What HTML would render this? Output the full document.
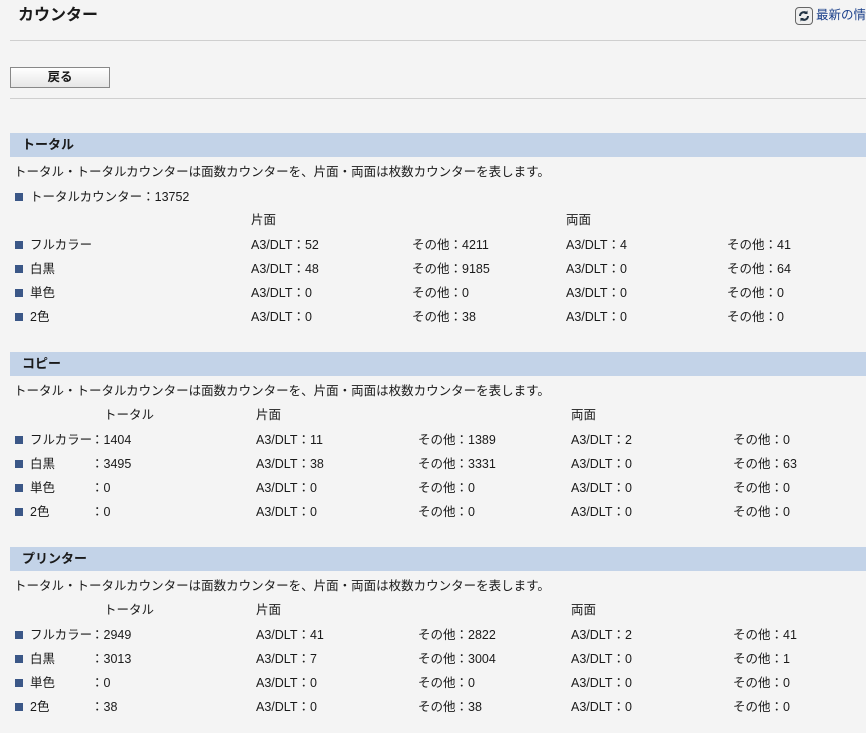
<!DOCTYPE html>
<html><head><meta charset="utf-8"><style>
body{margin:0;width:866px;height:733px;background:#f4f4f4;font-family:"Liberation Sans","Noto Sans CJK JP",sans-serif;font-size:12.5px;color:#1a1a1a;position:relative;overflow:hidden}
.a{position:absolute;white-space:nowrap;line-height:16px}
.hr{position:absolute;left:10px;right:0;height:1px;background:#cfcfcf}
.bar{position:absolute;left:10px;right:0;height:24px;background:#c3d3e8;font-weight:bold;font-size:13px;line-height:24px;padding-left:12px;box-sizing:border-box}
.b{position:absolute;width:8px;height:8px;background:#3b5787}
</style></head><body>
<div class="a" style="left:18px;top:6px;font-size:16px;font-weight:bold;line-height:20px">カウンター</div>
<div class="a" style="left:795px;top:7px;width:18px;height:18px;border:1px solid #666;border-radius:4px;box-sizing:border-box;background:#eee"><svg width="16" height="16" viewBox="0 0 16 16" style="position:absolute;left:0;top:0"><path d="M4 8a4 4 0 0 1 7-2.5M12 8a4 4 0 0 1-7 2.5" stroke="#234" stroke-width="2" fill="none"/><path d="M11.5 2.5v3.5h-3.5zM4.5 13.5v-3.5h3.5z" fill="#234"/></svg></div>
<div class="a" style="left:816px;top:7px;color:#1a3f8a">最新の情報</div>
<div class="hr" style="top:40px"></div>
<div class="a" style="left:10px;top:67px;width:100px;height:21px;box-sizing:border-box;border:1px solid #888;background:linear-gradient(#fff,#e6e6e6);text-align:center;font-weight:bold;line-height:19px">戻る</div>
<div class="hr" style="top:98px"></div>

<div class="bar" style="top:133px">トータル</div>
<div class="a" style="left:14px;top:164px">トータル・トータルカウンターは面数カウンターを、片面・両面は枚数カウンターを表します。</div>
<div class="b" style="left:15px;top:193px"></div><div class="a" style="left:30px;top:189px">トータルカウンター：13752</div>
<div class="a" style="left:251px;top:212px">片面</div><div class="a" style="left:566px;top:212px">両面</div>
<div class="b" style="left:15px;top:241px"></div><div class="a" style="left:30px;top:237px">フルカラー</div>
<div class="a" style="left:251px;top:237px">A3/DLT：52</div><div class="a" style="left:412px;top:237px">その他：4211</div><div class="a" style="left:566px;top:237px">A3/DLT：4</div><div class="a" style="left:727px;top:237px">その他：41</div>
<div class="b" style="left:15px;top:265px"></div><div class="a" style="left:30px;top:261px">白黒</div>
<div class="a" style="left:251px;top:261px">A3/DLT：48</div><div class="a" style="left:412px;top:261px">その他：9185</div><div class="a" style="left:566px;top:261px">A3/DLT：0</div><div class="a" style="left:727px;top:261px">その他：64</div>
<div class="b" style="left:15px;top:289px"></div><div class="a" style="left:30px;top:285px">単色</div>
<div class="a" style="left:251px;top:285px">A3/DLT：0</div><div class="a" style="left:412px;top:285px">その他：0</div><div class="a" style="left:566px;top:285px">A3/DLT：0</div><div class="a" style="left:727px;top:285px">その他：0</div>
<div class="b" style="left:15px;top:313px"></div><div class="a" style="left:30px;top:309px">2色</div>
<div class="a" style="left:251px;top:309px">A3/DLT：0</div><div class="a" style="left:412px;top:309px">その他：38</div><div class="a" style="left:566px;top:309px">A3/DLT：0</div><div class="a" style="left:727px;top:309px">その他：0</div>

<div class="bar" style="top:352px">コピー</div>
<div class="a" style="left:14px;top:383px">トータル・トータルカウンターは面数カウンターを、片面・両面は枚数カウンターを表します。</div>
<div class="a" style="left:104px;top:407px">トータル</div><div class="a" style="left:256px;top:407px">片面</div><div class="a" style="left:571px;top:407px">両面</div>
<div class="b" style="left:15px;top:436px"></div><div class="a" style="left:30px;top:432px">フルカラー</div><div class="a" style="left:91px;top:432px">：1404</div>
<div class="a" style="left:256px;top:432px">A3/DLT：11</div><div class="a" style="left:418px;top:432px">その他：1389</div><div class="a" style="left:571px;top:432px">A3/DLT：2</div><div class="a" style="left:733px;top:432px">その他：0</div>
<div class="b" style="left:15px;top:460px"></div><div class="a" style="left:30px;top:456px">白黒</div><div class="a" style="left:91px;top:456px">：3495</div>
<div class="a" style="left:256px;top:456px">A3/DLT：38</div><div class="a" style="left:418px;top:456px">その他：3331</div><div class="a" style="left:571px;top:456px">A3/DLT：0</div><div class="a" style="left:733px;top:456px">その他：63</div>
<div class="b" style="left:15px;top:484px"></div><div class="a" style="left:30px;top:480px">単色</div><div class="a" style="left:91px;top:480px">：0</div>
<div class="a" style="left:256px;top:480px">A3/DLT：0</div><div class="a" style="left:418px;top:480px">その他：0</div><div class="a" style="left:571px;top:480px">A3/DLT：0</div><div class="a" style="left:733px;top:480px">その他：0</div>
<div class="b" style="left:15px;top:508px"></div><div class="a" style="left:30px;top:504px">2色</div><div class="a" style="left:91px;top:504px">：0</div>
<div class="a" style="left:256px;top:504px">A3/DLT：0</div><div class="a" style="left:418px;top:504px">その他：0</div><div class="a" style="left:571px;top:504px">A3/DLT：0</div><div class="a" style="left:733px;top:504px">その他：0</div>

<div class="bar" style="top:547px">プリンター</div>
<div class="a" style="left:14px;top:578px">トータル・トータルカウンターは面数カウンターを、片面・両面は枚数カウンターを表します。</div>
<div class="a" style="left:104px;top:602px">トータル</div><div class="a" style="left:256px;top:602px">片面</div><div class="a" style="left:571px;top:602px">両面</div>
<div class="b" style="left:15px;top:631px"></div><div class="a" style="left:30px;top:627px">フルカラー</div><div class="a" style="left:91px;top:627px">：2949</div>
<div class="a" style="left:256px;top:627px">A3/DLT：41</div><div class="a" style="left:418px;top:627px">その他：2822</div><div class="a" style="left:571px;top:627px">A3/DLT：2</div><div class="a" style="left:733px;top:627px">その他：41</div>
<div class="b" style="left:15px;top:655px"></div><div class="a" style="left:30px;top:651px">白黒</div><div class="a" style="left:91px;top:651px">：3013</div>
<div class="a" style="left:256px;top:651px">A3/DLT：7</div><div class="a" style="left:418px;top:651px">その他：3004</div><div class="a" style="left:571px;top:651px">A3/DLT：0</div><div class="a" style="left:733px;top:651px">その他：1</div>
<div class="b" style="left:15px;top:679px"></div><div class="a" style="left:30px;top:675px">単色</div><div class="a" style="left:91px;top:675px">：0</div>
<div class="a" style="left:256px;top:675px">A3/DLT：0</div><div class="a" style="left:418px;top:675px">その他：0</div><div class="a" style="left:571px;top:675px">A3/DLT：0</div><div class="a" style="left:733px;top:675px">その他：0</div>
<div class="b" style="left:15px;top:703px"></div><div class="a" style="left:30px;top:699px">2色</div><div class="a" style="left:91px;top:699px">：38</div>
<div class="a" style="left:256px;top:699px">A3/DLT：0</div><div class="a" style="left:418px;top:699px">その他：38</div><div class="a" style="left:571px;top:699px">A3/DLT：0</div><div class="a" style="left:733px;top:699px">その他：0</div>
</body></html>
